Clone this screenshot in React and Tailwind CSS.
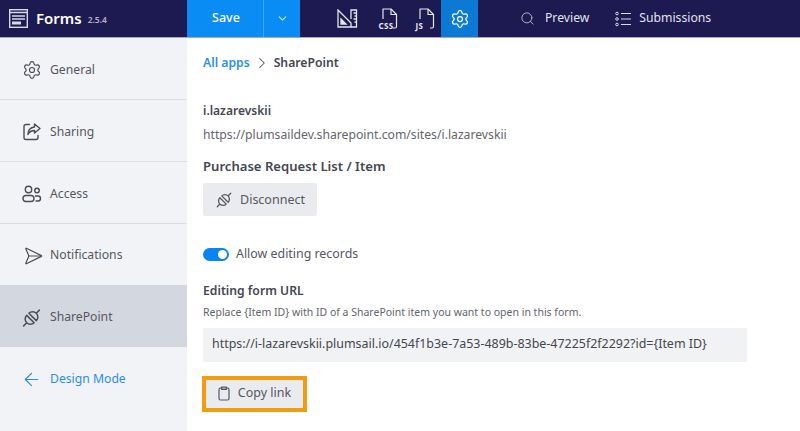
import { ChevronDown, ChevronRight, Search, Settings, ArrowLeft, Send } from "lucide-react";

const PlugIcon = ({ size = 22 }) => (
  <svg width={size} height={size} viewBox="0 0 24 24" fill="none" stroke="currentColor" strokeWidth="1.700" strokeLinecap="round" strokeLinejoin="round">
    <path d="M9 6.500L17.500 15A6 6 0 0 0 9 6.500z" />
    <path d="M6.500 9L15 17.500A6 6 0 0 1 6.500 9z" />
    <path d="M18 6l3-3M6 18l-3 3" />
  </svg>
);

const ShareIcon = () => (
  <svg width="20" height="20" viewBox="0 0 20 20" fill="none" stroke="currentColor" strokeWidth="1.4" strokeLinecap="round" strokeLinejoin="round">
    <path d="M7.500 2.500H4a2 2 0 00-2 2v11a2 2 0 002 2h10a2 2 0 002-2v-2" />
    <path d="M12.500 2l5.500 4.500-5.500 4.500V8.500c-3 0-5 1-6.500 4 0-4.500 2.500-7 6.500-7.500z" />
  </svg>
);

const PeopleIcon = () => (
  <svg width="20" height="20" viewBox="0 0 20 20" fill="none" stroke="currentColor" strokeWidth="1.4">
    <circle cx="6.500" cy="5.500" r="3.200" />
    <circle cx="15" cy="6.500" r="2.300" />
    <rect x="1" y="11.500" width="11" height="6" rx="3" />
    <path d="M13 12h3a2.500 2.500 0 010 5h-2.500" />
  </svg>
);

const FormsLogo = () => (
  <svg width="19" height="19" viewBox="0 0 19 19" fill="none">
    <rect x="0.700" y="0.700" width="17.600" height="17.600" stroke="#d9d9e6" strokeWidth="1.400" />
    <path d="M1 3.500h17M3 7h13M3 10h13" stroke="#d9d9e6" strokeWidth="1.500" />
    <rect x="3" y="12.500" width="9" height="3" fill="#d9d9e6" />
  </svg>
);

const RulerIcon = () => (
  <svg width="21" height="19" viewBox="0 0 21 19" fill="none" stroke="#e5e5ee" strokeWidth="1.300">
    <path d="M1 1l13 13v4H1z" />
    <path d="M4 10l5 5H4z" fill="#e5e5ee" />
    <path d="M14 10V1h5.500v17H14M16.500 4h3M17.500 7h2M16.500 10h3M17.500 13h2" />
  </svg>
);

const FileTagIcon = ({ label }) => (
  <div className="relative w-[19px] h-[21px]">
    <svg width="19" height="21" viewBox="0 0 19 21" fill="none" stroke="#e5e5ee" strokeWidth="1.200" strokeLinejoin="round">
      <path d="M4 11V1h8l5.500 5.500V18.500a1.500 1.500 0 01-1.500 1.500h-2" />
      <path d="M12 1v5.500h5.500" />
    </svg>
    <span className="absolute left-0 bottom-[-1px] text-[8px] leading-[9px] font-bold text-[#e5e5ee] tracking-[0.4px]">{label}</span>
  </div>
);

const ClipIcon = () => (
  <svg width="12" height="15" viewBox="0 0 12 15" fill="none" stroke="currentColor" strokeWidth="1.200" strokeLinejoin="round">
    <rect x="1" y="2" width="10" height="12" rx="1.500" />
    <path d="M3.500 3.500V1h5v2.500z" />
  </svg>
);

const navItems = [
  { label: "General", icon: <Settings size={20} strokeWidth={1.4} />, cls: "h-[62px] pt-[3px] border-b border-[#dcdee2]" },
  { label: "Sharing", icon: <ShareIcon />, cls: "h-[62px] pt-[3px] border-b border-[#dcdee2]" },
  { label: "Access", icon: <PeopleIcon />, cls: "h-[62px] pt-[3px] border-b border-[#dcdee2]" },
  { label: "Notifications", icon: <Send size={20} strokeWidth={1.4} className="rotate-45 -translate-x-[2px]" />, cls: "h-[61px] pt-[2px]" },
  { label: "SharePoint", icon: <PlugIcon />, cls: "h-[62px] pt-[3px] bg-[#d3d7e0]" },
];

export default function App() {
  return (
    <div className="w-[800px] h-[431px] overflow-hidden flex flex-col bg-white font-['Noto_Sans','Open_Sans',sans-serif] text-[#44474f]">
      {/* Top bar */}
      <header className="h-[38px] shrink-0 flex bg-[#1c1a50] border-b border-[#a9a6c9] text-[#e4e4ee]">
        <div className="w-[187px] flex items-center pl-[9px] gap-[8px]">
          <FormsLogo />
          <span className="text-[15px] font-semibold text-white">Forms</span>
          <span className="text-[8.500px] font-semibold text-[#b5b5c8] mt-[3px] -ml-[2px]">2.5.4</span>
        </div>
        <button className="w-[77px] pl-[2px] bg-[#0a8cf5] text-white text-[12.500px] font-medium flex items-center justify-center border-r border-[#46a8f6]">
          Save
        </button>
        <button className="w-[36px] bg-[#0a8cf5] text-[#cfe7fb] flex items-center justify-center">
          <ChevronDown size={13} strokeWidth={2} />
        </button>
        <div className="flex items-center ml-[13px]">
          <div className="w-[54px] flex justify-center ml-[7px]"><RulerIcon /></div>
          <div className="w-[28px] flex justify-center"><FileTagIcon label="CSS" /></div>
          <div className="w-[28px] flex justify-center ml-[9px]"><FileTagIcon label="JS" /></div>
        </div>
        <div className="w-[37px] ml-[2px] bg-[#0c79d4] flex items-center justify-center text-white">
          <Settings size={20} strokeWidth={1.5} />
        </div>
        <div className="flex items-center ml-[42px] gap-[10px]">
          <Search size={15} strokeWidth={1.4} className="text-[#c5c5d5]" />
          <span className="text-[12.200px]">Preview</span>
        </div>
        <div className="flex items-center ml-[26px] gap-[8px]">
          <svg width="16" height="16" viewBox="0 0 16 16" fill="none" stroke="#d9d9e6" strokeWidth="1">
            <circle cx="2" cy="2.500" r="1.300" />
            <circle cx="2" cy="8" r="1.300" />
            <circle cx="2" cy="13.500" r="1.300" />
            <path d="M6 2.500h10M6 8h10M6 13.500h10" />
          </svg>
          <span className="text-[12.200px]">Submissions</span>
        </div>
      </header>

      <div className="flex flex-1 min-h-0">
        {/* Sidebar */}
        <aside className="w-[187px] shrink-0 bg-[#f1f3f6] text-[#55585f]">
          {navItems.map((item) => (
            <div key={item.label} className={`flex items-center pl-[21px] gap-[8px] ${item.cls}`}>
              <span className="w-[21px] flex justify-center text-[#4a4d54]">{item.icon}</span>
              <span className="text-[12.200px]">{item.label}</span>
            </div>
          ))}
          <div className="h-[62px] pt-[3px] flex items-center pl-[21px] gap-[8px] text-[#2b8fe8]">
            <ArrowLeft size={21} strokeWidth={1.4} />
            <span className="text-[12.200px]">Design Mode</span>
          </div>
        </aside>

        {/* Main */}
        <main className="flex-1 pl-[16px] pr-[53px]">
          <div className="flex items-center pt-[15px] h-[35px] text-[12.200px] font-semibold">
            <span className="text-[#2b8fe8]">All apps</span>
            <ChevronRight size={18} strokeWidth={1.4} className="mx-[3px] text-[#55585f]" />
            <span className="text-[#44474f]">SharePoint</span>
          </div>
          <p className="mt-[30px] text-[12px] font-semibold leading-[16px]">i.lazarevskii</p>
          <p className="mt-[7px] text-[12.200px] leading-[18px] text-[#62656c]">https://plumsaildev.sharepoint.com/sites/i.lazarevskii</p>
          <p className="mt-[13px] text-[13.100px] font-semibold leading-[18px]">Purchase Request List / Item</p>
          <button className="mt-[8px] w-[114px] h-[33px] pt-[1px] bg-[#e9ebef] rounded-[2px] flex items-center justify-center gap-[7px] text-[12.500px] text-[#55585f]">
            <PlugIcon size={18} />
            Disconnect
          </button>
          <div className="mt-[29px] flex items-center gap-[7px]">
            <span className="w-[26px] h-[13px] bg-[#0a84f0] rounded-full flex justify-end items-center pr-[2px]">
              <span className="w-[9px] h-[9px] bg-white rounded-full" />
            </span>
            <span className="text-[12.400px] text-[#55585f]">Allow editing records</span>
          </div>
          <p className="mt-[18px] text-[12.200px] font-semibold leading-[18px]">Editing form URL</p>
          <p className="mt-[5px] text-[10.500px] leading-[14px] text-[#62656c]">Replace {"{Item ID}"} with ID of a SharePoint item you want to open in this form.</p>
          <div className="mt-[9px] h-[34px] bg-[#f1f2f4] flex items-center pl-[9px] text-[12.450px] text-[#44474f]">
            https://i-lazarevskii.plumsail.io/454f1b3e-7a53-489b-83be-47225f2f2292?id={"{Item ID}"}
          </div>
          <button className="mt-[14px] -ml-[1px] w-[105px] h-[36px] border-[4px] border-[#f39c12] bg-[#e9ebef] flex items-center justify-center gap-[8px] text-[12.500px] text-[#55585f]">
            <ClipIcon />
            Copy link
          </button>
        </main>
      </div>
    </div>
  );
}
